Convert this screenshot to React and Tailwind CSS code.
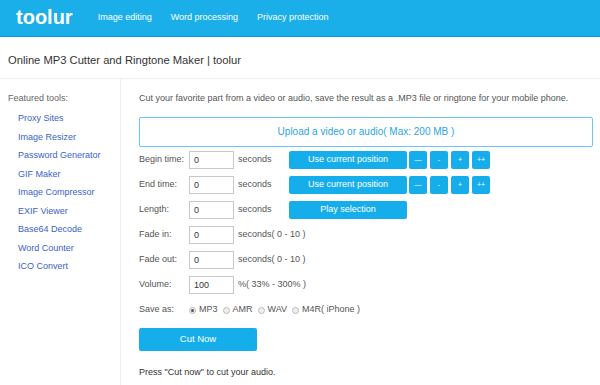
import React from "react";

const links = ["Proxy Sites","Image Resizer","Password Generator","GIF Maker","Image Compressor","EXIF Viewer","Base64 Decode","Word Counter","ICO Convert"];

function Row({ label, value, unit, children }) {
  return (
    <div className="flex items-center h-[25px]">
      <span className="w-[50px] shrink-0 whitespace-nowrap">{label}</span>
      <input readOnly value={value} className="w-[45px] h-[18px] border border-[#c8c8c8] px-[4px] text-[9px] text-[#333] outline-none" />
      <span className="ml-[4px] w-[51px] shrink-0 whitespace-nowrap">{unit}</span>
      {children}
    </div>
  );
}

function PosButtons() {
  return (
    <div className="flex">
      <button className="w-[118px] h-[18px] bg-[#16aeea] text-white text-[9px] rounded-[2px] mr-[2px]">Use current position</button>
      <div className="flex gap-[3px]">
        {["—","-","+","++"].map((s) => (
          <button key={s} className="w-[18px] h-[18px] bg-[#16aeea] text-white text-[7px] rounded-[2px] flex items-center justify-center">{s}</button>
        ))}
      </div>
    </div>
  );
}

export default function App() {
  return (
    <div className="w-[600px] h-[385px] bg-white overflow-hidden text-[#555]" style={{ fontFamily: '"Liberation Sans", Arial, sans-serif' }}>
      <div className="h-[37px] bg-[#1aafe8] border-b border-[#1598cc] flex items-center">
        <span className="ml-[16px] text-white text-[20px] font-bold leading-none mb-[2px]">toolur</span>
        <nav className="flex ml-[25px] gap-[19px] text-white text-[9px]">
          <span>Image editing</span>
          <span>Word processing</span>
          <span>Privacy protection</span>
        </nav>
      </div>
      <div className="h-[42px] border-b border-[#eeeeee] flex items-center pl-[8px] pt-[6px] text-[11.2px] text-[#333]">
        Online MP3 Cutter and Ringtone Maker | toolur
      </div>
      <div className="flex">
        <aside className="w-[121px] shrink-0 border-r border-[#f0f0f0] h-[306px] pl-[8px] pt-[13px] text-[9px]">
          <div className="text-[#666] mb-[4px]">Featured tools:</div>
          <ul className="pl-[10px]">
            {links.map((l) => (
              <li key={l} className="h-[18.5px] flex items-center text-[#3a62c9]">{l}</li>
            ))}
          </ul>
        </aside>
        <main className="flex-1 pl-[18px] pr-[7px] pt-[13px] text-[9px]">
          <p className="text-[#555] mb-[11px] whitespace-nowrap">Cut your favorite part from a video or audio, save the result as a .MP3 file or ringtone for your mobile phone.</p>
          <div className="h-[30px] border border-[#6cc6ee] rounded-[2px] flex items-center justify-center text-[#2aa6df] text-[10px] mb-[1px]">
            Upload a video or audio( Max: 200 MB )
          </div>
          <Row label="Begin time:" value="0" unit="seconds"><PosButtons /></Row>
          <Row label="End time:" value="0" unit="seconds"><PosButtons /></Row>
          <Row label="Length:" value="0" unit="seconds">
            <button className="w-[118px] h-[18px] bg-[#16aeea] text-white text-[9px] rounded-[2px]">Play selection</button>
          </Row>
          <Row label="Fade in:" value="0" unit="seconds( 0 - 10 )" />
          <Row label="Fade out:" value="0" unit="seconds( 0 - 10 )" />
          <Row label="Volume:" value="100" unit="%( 33% - 300% )" />
          <div className="flex items-center h-[25px]">
            <span className="w-[50px] shrink-0">Save as:</span>
            {[["MP3", true], ["AMR", false], ["WAV", false], ["M4R( iPhone )", false]].map(([t, c]) => (
              <label key={t} className="flex items-center mr-[5px]">
                <span className="w-[7px] h-[7px] rounded-full border border-[#bbb] bg-[#eee] flex items-center justify-center mr-[3px]">
                  {c && <span className="w-[3px] h-[3px] rounded-full bg-[#555]" />}
                </span>
                {t}
              </label>
            ))}
          </div>
          <button className="mt-[5px] w-[118px] h-[23px] bg-[#16aeea] text-white text-[9.5px] rounded-[2px]">Cut Now</button>
          <p className="mt-[15px] text-[#333]">Press "Cut now" to cut your audio.</p>
        </main>
      </div>
    </div>
  );
}
